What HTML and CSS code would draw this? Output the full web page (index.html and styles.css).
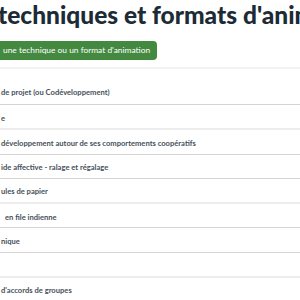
FILE: index.html
```html
<!DOCTYPE html>
<html lang="fr">
<head>
    <meta charset="UTF-8">
    <meta name="viewport" content="width=device-width, initial-scale=1.0">
    <title>Techniques et formats d'animation</title>
    <link rel="stylesheet" href="styles.css">
</head>
<body>
    <div class="title-container">
        <h1>techniques et formats d'animation</h1>
    </div>
    <div class="actions">
        <a class="add-btn" href="#">une technique ou un format d'animation</a>
    </div>
    <div class="list">
        <div class="row first"><a href="#">de projet (ou Codéveloppement)</a></div>
        <div class="row group-end"><a href="#">e</a></div>
        <div class="row"><a href="#">développement autour de ses comportements coopératifs</a></div>
        <div class="row"><a href="#">ide affective - ralage et régalage</a></div>
        <div class="row group-end"><a href="#">ules de papier</a></div>
        <div class="row"><a href="#" class="indent">en file indienne</a></div>
        <div class="row"><a href="#">nique</a></div>
        <div class="row group-end"></div>
        <div class="row"><a href="#">d'accords de groupes</a></div>
    </div>
</body>
</html>
```

FILE: styles.css
```css
body, html {
    margin: 0;
    font-family: Lato, "Noto Sans", sans-serif;
    background: #fff;
    overflow: hidden;
}
.title-container {
    white-space: nowrap;
    overflow: hidden;
}
.title-container h1 {
    margin: 0;
    margin-left: -2px;
    font-size: 24.5px;
    line-height: 28px;
    padding-top: 1px;
    font-weight: 900;
    color: #1c2b36;
}
.actions {
    margin-top: 8px;
}
.add-btn {
    display: inline-block;
    height: 19px;
    line-height: 19px;
    padding: 0 7px 0 3px;
    background-color: #43893f;
    color: white;
    font-size: 8.4px;
    text-decoration: none;
    border-radius: 0 4px 4px 0;
}
.list {
    margin-top: 7px;
    border-top: 2px solid #f3f3f3;
}
.row {
    height: 21.25px;
    box-sizing: content-box;
    display: flex;
    align-items: center;
    padding-top: 2px;
    border-bottom: 1px solid #d4d4d4;
    white-space: nowrap;
    overflow: hidden;
}
.row.first {
    height: 33px;
    padding-top: 2px;
    align-items: flex-end;
}
.row.group-end {
    border-bottom: 2px solid #ececec;
}
.row a {
    margin-left: 1px;
    font-size: 7.6px;
    font-weight: 700;
    color: #46505a;
    text-decoration: none;
}
.row.first a {
    padding-bottom: 7px;
}
.row a.indent {
    margin-left: 5px;
}
```
